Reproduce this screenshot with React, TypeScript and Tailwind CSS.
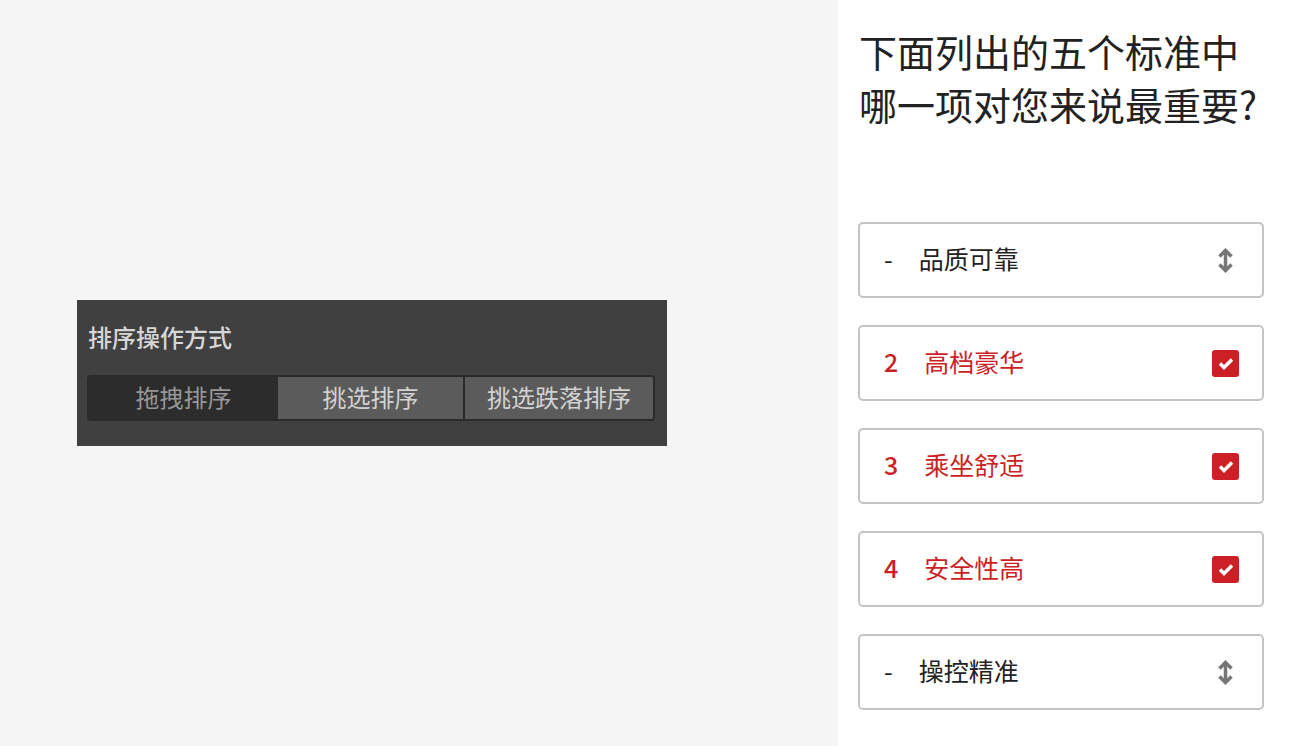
const font = { fontFamily: '"Noto Sans CJK SC", "Noto Sans", sans-serif' };

type Item = { rank: string; label: string; picked: boolean };

const items: Item[] = [
  { rank: "-", label: "品质可靠", picked: false },
  { rank: "2", label: "高档豪华", picked: true },
  { rank: "3", label: "乘坐舒适", picked: true },
  { rank: "4", label: "安全性高", picked: true },
  { rank: "-", label: "操控精准", picked: false },
];

function SortArrows() {
  return (
    <svg width="17" height="27" viewBox="0 0 17 27" fill="none">
      <path d="M8.5 3v21" stroke="#767676" strokeWidth="3.5" />
      <path d="M2.5 9.5l6-6 6 6M2.5 17.5l6 6 6-6" stroke="#767676" strokeWidth="3.5" />
    </svg>
  );
}

function Check() {
  return (
    <div className="flex h-[27px] w-[27px] items-center justify-center rounded-[3px] bg-[#cc1f26]">
      <svg width="16" height="13" viewBox="0 0 16 13" fill="none">
        <path d="M2 6.5l4 4L14 2.5" stroke="#fff" strokeWidth="3.5" />
      </svg>
    </div>
  );
}

export default function App() {
  return (
    <div className="flex h-[746px] w-[1290px] overflow-hidden bg-[#f5f5f5]" style={font}>
      {/* 左侧 设置面板 */}
      <div className="w-[838px] pl-[77px] pt-[300px]">
        <div className="flex h-[146px] w-[590px] flex-col bg-[#404040] pl-[10px] pr-[12px] pt-[21px]">
          <div className="pl-[1px] text-[24px] font-medium leading-[32px] text-[#d6d6d6]">排序操作方式</div>
          <div className="mt-[22px] flex h-[46px] overflow-hidden rounded-[4px] border-2 border-[#2a2a2a] text-[24px] leading-none">
            <div className="flex w-[189px] items-center justify-center bg-[#2c2c2c] pb-[3px] text-[#979797]">拖拽排序</div>
            <div className="flex w-[185px] items-center justify-center bg-[#5b5b5b] pb-[3px] text-[#d2d2d2]">挑选排序</div>
            <div className="flex flex-1 items-center justify-center border-l-2 border-[#2a2a2a] bg-[#5b5b5b] pb-[3px] text-[#d2d2d2]">
              挑选跌落排序
            </div>
          </div>
        </div>
      </div>

      {/* 右侧 问卷 */}
      <div className="flex flex-1 flex-col bg-white pl-[20px] pr-[26px] pt-[24px]">
        <h1 className="pl-[1px] text-[38px] leading-[53px] text-[#222]">
          下面列出的五个标准中
          <br />
          哪一项对您来说最重要?
        </h1>
        <div className="mt-[92px] flex flex-col gap-[27px]">
          {items.map((it, i) => (
            <div
              key={i}
              className="flex h-[76px] items-center rounded-[5px] border-2 border-[#c4c4c4] pl-[24px] pr-[23px] pb-[3px]"
            >
              <span
                className={
                  "mr-[26px] text-[25px] " + (it.picked ? "font-medium text-[#cc1f26]" : "text-[#222]")
                }
              >
                {it.rank}
              </span>
              <span className={"text-[25px] " + (it.picked ? "text-[#cc1f26]" : "text-[#222]")}>{it.label}</span>
              <div className="ml-auto flex w-[27px] justify-center pt-[3px]">{it.picked ? <Check /> : <SortArrows />}</div>
            </div>
          ))}
        </div>
      </div>
    </div>
  );
}
